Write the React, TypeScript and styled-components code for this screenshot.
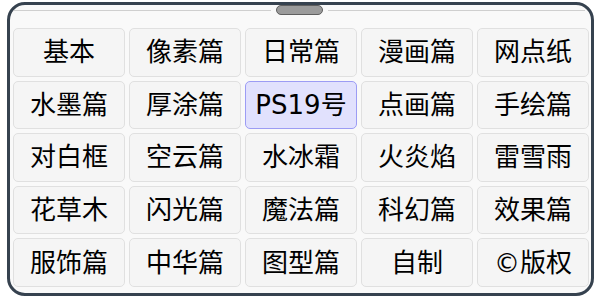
import React, { useState } from 'react';
import styled, { createGlobalStyle } from 'styled-components';

const GlobalStyle = createGlobalStyle`
  html, body {
    margin: 0;
    padding: 0;
    background: #ffffff;
  }
  body {
    font-family: "Noto Sans CJK SC", "Noto Sans", sans-serif;
  }
`;

const Panel = styled.div`
  box-sizing: border-box;
  width: 587px;
  height: 294px;
  margin: 2px 0 0 7px;
  border: 3px solid #36424f;
  border-radius: 18px;
  background: #f9f9f9;
  padding: 0 2px 6px 3px;
  display: flex;
  flex-direction: column;
  overflow: hidden;
`;

const HandleBar = styled.div`
  display: flex;
  align-items: center;
  gap: 5px;
  height: 10px;
  padding: 0 4px 0 0;
  margin-bottom: 13px;
`;

const HandleLine = styled.div`
  flex: 1;
  height: 1px;
  background: #cfcfcf;
`;

const Handle = styled.div`
  box-sizing: border-box;
  width: 47px;
  height: 10px;
  border-radius: 5px;
  background: #9b9b9b;
  border: 1.5px solid #5f5f5f;
`;

const Grid = styled.div`
  flex: 1;
  display: grid;
  grid-template-columns: repeat(5, 1fr);
  grid-template-rows: repeat(5, 1fr);
  gap: 4px;
`;

const Key = styled.button<{ $active?: boolean }>`
  box-sizing: border-box;
  display: flex;
  align-items: center;
  justify-content: center;
  padding: 0;
  border-radius: 5px;
  border: 1px solid ${({ $active }) => ($active ? '#9c9cf4' : '#e0e0e0')};
  background: ${({ $active }) => ($active ? '#e1e1fd' : '#f5f5f5')};
  color: #000;
  font-family: "DejaVu Sans", "Noto Sans CJK SC", sans-serif;
  font-size: 26px;
  line-height: 1;
  cursor: pointer;
`;

const labels = [
  '基本', '像素篇', '日常篇', '漫画篇', '网点纸',
  '水墨篇', '厚涂篇', 'PS19号', '点画篇', '手绘篇',
  '对白框', '空云篇', '水冰霜', '火炎焰', '雷雪雨',
  '花草木', '闪光篇', '魔法篇', '科幻篇', '效果篇',
  '服饰篇', '中华篇', '图型篇', '自制', '©版权',
];

export default function App() {
  const [active, setActive] = useState('PS19号');

  return (
    <>
      <GlobalStyle />
      <Panel>
        <HandleBar>
          <HandleLine />
          <Handle />
          <HandleLine />
        </HandleBar>
        <Grid>
          {labels.map(label => (
            <Key
              key={label}
              $active={label === active}
              onClick={() => setActive(label)}
            >
              {label}
            </Key>
          ))}
        </Grid>
      </Panel>
    </>
  );
}
